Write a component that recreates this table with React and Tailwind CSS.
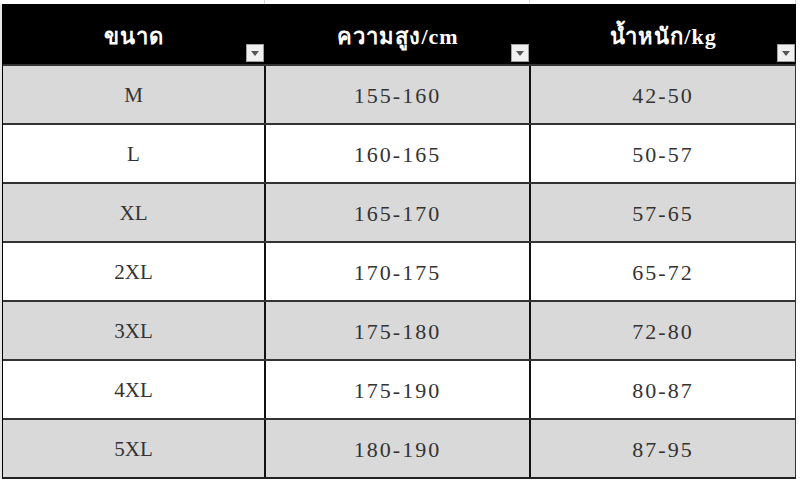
import React from 'react';

const rows = [
  ['M', '155-160', '42-50'],
  ['L', '160-165', '50-57'],
  ['XL', '165-170', '57-65'],
  ['2XL', '170-175', '65-72'],
  ['3XL', '175-180', '72-80'],
  ['4XL', '175-190', '80-87'],
  ['5XL', '180-190', '87-95'],
];

const FilterButton = () => (
  <div className="absolute right-[1px] bottom-[2px] w-[18px] h-[18px] bg-[#f0f0f0] border border-[#a0a0a0] flex items-center justify-center">
    <svg width="8" height="5" viewBox="0 0 8 5">
      <path d="M0 0h8L4 5z" fill="#555" />
    </svg>
  </div>
);

export default function App() {
  const cols = 'grid grid-cols-[263px_265px_265px]';
  return (
    <div className="w-[800px] h-[481px] bg-white overflow-hidden relative" style={{ fontFamily: '"Liberation Serif", "DejaVu Serif", serif' }}>
      {/* grid lines above the table */}
      <div className="h-[4px] flex">
        <div className="w-[265px] border-r border-[#d4d4d4]" />
        <div className="w-[265px] border-r border-[#d4d4d4]" />
        <div className="w-[266px] border-r border-[#d4d4d4]" />
      </div>
      <div className="flex">
        <div className="w-[2px] bg-[#e6e6e6]" />
        <div className="w-[794px] border-l border-black border-b-2 border-b-[#222]">
          {/* header */}
          <div className={`${cols} h-[60px] bg-black text-white`}>
            {['ขนาด', 'ความสูง/cm', 'น้ำหนัก/kg'].map((h, i) => (
              <div key={i} className={`relative flex items-center justify-center pt-[5px] text-[22px] font-bold tracking-[1px] ${i < 2 ? 'border-r border-black' : ''}`}>
                {h}
                <FilterButton />
              </div>
            ))}
          </div>
          {rows.map((r, ri) => (
            <div key={ri} className={`${cols} h-[59px] border-t-2 border-[#333] ${ri % 2 === 0 ? 'bg-[#d9d9d9]' : 'bg-white'} text-[#333]`}>
              {r.map((c, ci) => (
                <div key={ci} className={`flex items-center justify-center pt-[2px] ${ci === 0 ? 'text-[21px]' : 'text-[22px] tracking-[2px]'} ${ci < 2 ? 'border-r-2 border-[#111]' : 'border-r border-[#333]'}`}>
                  {c}
                </div>
              ))}
            </div>
          ))}
        </div>
      </div>
    </div>
  );
}
